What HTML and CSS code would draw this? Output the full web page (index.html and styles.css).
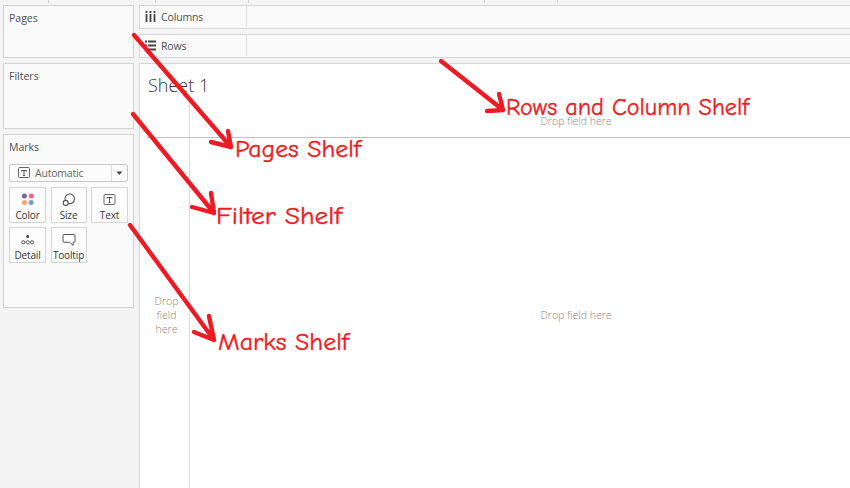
FILE: index.html
```html
<!DOCTYPE html>
<html lang="en">
<head>
<meta charset="utf-8">
<title>Sheet 1</title>
<link rel="stylesheet" href="styles.css">
</head>
<body>
<div class="app">
  <div class="ruler"><i class="t1"></i><i class="t2"></i><i class="t3"></i><i class="t4"></i><i class="t5"></i></div>
  <aside class="side">
    <section class="card pages"><h2>Pages</h2></section>
    <section class="card filters"><h2>Filters</h2></section>
    <section class="card marks">
      <h2>Marks</h2>
      <div class="select">
        <svg width="12" height="12" viewBox="0 0 12 12"><rect x=".5" y=".5" width="11" height="10" rx="1" fill="none" stroke="#666"/><path d="M3.5 4.5V3.5h5v1M6 3.5v5M5 8.5h2" fill="none" stroke="#555"/></svg>
        <span class="value">Automatic</span>
        <span class="arrow"><svg width="7" height="5" viewBox="0 0 7 5"><path d="M.4.5h6L3.4 4z" fill="#444"/></svg></span>
      </div>
      <div class="grid">
        <div class="btn"><svg width="16" height="14" viewBox="0 0 16 14"><circle cx="4.4" cy="3" r="2.5" fill="#7b6592"/><circle cx="11.2" cy="3" r="2.5" fill="#f4647d"/><circle cx="4.4" cy="9.6" r="2.5" fill="#f5a570"/><circle cx="11.2" cy="9.6" r="2.5" fill="#77a0c9"/></svg><span>Color</span></div>
        <div class="btn"><svg width="16" height="14" viewBox="0 0 16 14"><path d="M4.2 7.4A4.8 4.8 0 1 1 7.4 10.4" fill="none" stroke="#555" stroke-width="1.1"/><circle cx="4.7" cy="9.9" r="2.5" fill="none" stroke="#555" stroke-width="1.1"/></svg><span>Size</span></div>
        <div class="btn"><svg width="16" height="14" viewBox="0 0 16 14"><rect x="2" y="1.5" width="11" height="10" rx="1" fill="none" stroke="#666"/><path d="M5 5.5v-1h5v1M7.5 4.5v5M6.5 9.5h2" fill="none" stroke="#555"/></svg><span>Text</span></div>
        <div class="btn"><svg width="16" height="14" viewBox="0 0 16 14"><circle cx="7.7" cy="3.4" r="1.5" fill="#444"/><g fill="none" stroke="#555"><circle cx="3.3" cy="9.3" r="1.6"/><circle cx="7.7" cy="9.3" r="1.6"/><circle cx="12.1" cy="9.3" r="1.6"/></g></svg><span>Detail</span></div>
        <div class="btn"><svg width="16" height="14" viewBox="0 0 16 14"><path d="M3 1.5h10q1 0 1 1v5.8q0 1-1 1h-.8v3L8.5 9.3H3q-1 0-1-1V2.5q0-1 1-1z" fill="none" stroke="#555"/></svg><span>Tooltip</span></div>
      </div>
    </section>
  </aside>
  <main class="main">
    <div class="shelf"><div class="label"><svg width="11" height="11" viewBox="0 0 11 11"><path d="M1.5 0v2M5.5 0v2M9.5 0v2M1.5 3v8M5.5 3v8M9.5 3v8" stroke="#444" stroke-width="1.8"/></svg><span>Columns</span></div></div>
    <div class="shelf"><div class="label"><svg width="11" height="11" viewBox="0 0 11 11"><path d="M0 1.5h2M0 5.5h2M0 9.5h2M3 1.5h8M3 5.5h8M3 9.5h8" stroke="#444" stroke-width="1.8"/></svg><span>Rows</span></div></div>
    <div class="sheet">
      <h1>Sheet 1</h1>
      <div class="view">
        <div class="corner"></div>
        <div class="top"><span>Drop field here</span></div>
        <div class="left"><span>Drop<br>field<br>here</span></div>
        <div class="center"><span>Drop field here</span></div>
      </div>
    </div>
  </main>
  <svg class="notes" width="850" height="488" viewBox="0 0 850 488">
    <g class="arrows">
      <path d="M134 35L231 147M228 131L231 147L211 142"/>
      <path d="M133 114L214 213M211 193L214 213L192 207"/>
      <path d="M130 225L214 340M209 316L214 340L194 332"/>
      <path d="M441 61L503 110M499 94L503 110L487 111"/>
    </g>
    <g class="words">
      <text x="235" y="156.5" textLength="126" lengthAdjust="spacingAndGlyphs">Pages Shelf</text>
      <text x="216" y="224" textLength="126" lengthAdjust="spacingAndGlyphs">Filter Shelf</text>
      <text x="218" y="349.5" textLength="131" lengthAdjust="spacingAndGlyphs">Marks Shelf</text>
      <text x="506" y="115" textLength="243" lengthAdjust="spacingAndGlyphs">Rows and Column Shelf</text>
    </g>
  </svg>
</div>
</body>
</html>
```

FILE: styles.css
```css
* { box-sizing: border-box; }
body { margin: 0; font: 10.5px/14px "Open Sans", "Noto Sans", sans-serif; color: #4e4e4e; overflow: hidden; }
h1, h2 { margin: 0; font-weight: 400; }
svg { display: block; flex: none; }
.app { position: relative; width: 850px; height: 488px; background: #f4f4f4; display: grid; grid-template: 5px 483px / 139px 711px; }
.ruler { grid-column: 1 / 3; display: flex; height: 3px; }
.ruler i { border-right: 1px solid #ccc; }
.t1 { width: 49px; }
.t2 { width: 107px; }
.t3 { width: 93px; }
.t4 { width: 236px; }
.t5 { width: 73px; }
.side { display: flex; flex-direction: column; gap: 5px; padding-left: 3px; }
.card { width: 131px; background: #fafafa; border: 1px solid #d2d2d2; padding: 5px; }
.card h2 { font-size: 10.5px; }
.pages { height: 53px; }
.filters { height: 66px; }
.marks { height: 174px; }
.select { display: flex; align-items: center; height: 18px; margin-top: 10px; width: 119px; border: 1px solid #c8c8c8; border-radius: 2px; background: #fcfcfc; padding-left: 8px; }
.value { margin-left: 5px; flex: 1; color: #666; letter-spacing: -0.2px; }
.arrow { width: 16px; height: 16px; border-left: 1px solid #ddd; display: grid; place-items: center; }
.grid { display: grid; grid-template-columns: 37px 36px 37px; gap: 4px 4.5px; margin-top: 5px; width: 119px; }
.btn { height: 36px; border: 1px solid #d4d4d4; background: #fdfdfd; display: flex; flex-direction: column; align-items: center; padding-top: 5px; color: #333; }
.btn span { margin-top: 1px; white-space: nowrap; font-size: 10px; letter-spacing: -0.15px; }
.main { display: flex; flex-direction: column; gap: 5px; }
.shelf { height: 24px; background: #fafafa; border: 1px solid #d6d6d6; border-right: 0; flex: none; }
.label { width: 106px; height: 21px; display: flex; align-items: center; box-shadow: 1px 0 #ddd; padding-left: 5px; gap: 5px; }
.label span { letter-spacing: -0.15px; }
.sheet { flex: 1; background: #fff; border: 1px solid #d6d6d6; border-width: 1px 0 0 1px; display: flex; flex-direction: column; }
h1 { font-size: 18px; line-height: 22px; padding: 10px 0 0 8px; height: 33px; font-weight: 300; color: #333; }
.view { flex: 1; display: grid; grid-template: 41px 1fr / 43px 1fr; margin-left: 7px; color: #888; text-align: center; font-weight: 300; }
.corner, .left { border-right: 1px solid #d9d9d9; }
.corner, .top { border-bottom: 1px solid #bfbfbf; }
.top { padding: 17px 0 0 112px; }
.center { padding: 170px 0 0 112px; }
.left { padding: 156px 3px 0 0; }
.notes { position: absolute; left: 0; top: 0; }
.arrows { fill: none; stroke: #ed1c24; stroke-width: 4.4; stroke-linecap: round; stroke-linejoin: round; }
.words { fill: #ed1c24; stroke: #ed1c24; stroke-width: 0.4; font: 24.5px "Comic Sans MS", "Comic Neue", cursive; }
```
